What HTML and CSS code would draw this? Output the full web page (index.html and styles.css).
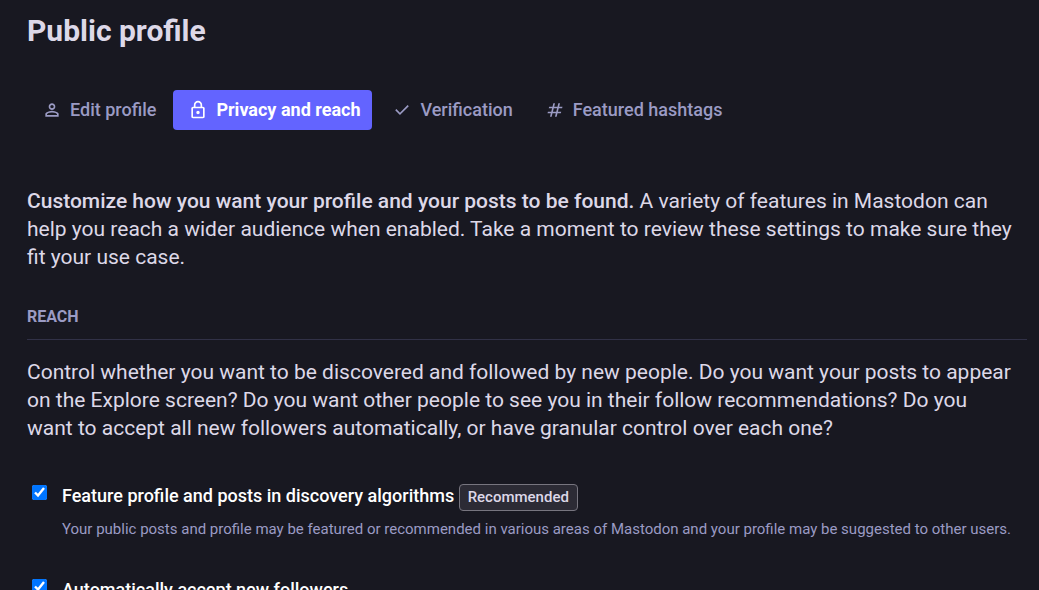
FILE: index.html
```html
<!DOCTYPE html>
<html lang="en">
<head>
    <meta charset="UTF-8">
    <meta name="viewport" content="width=device-width, initial-scale=1">
    <title>Public profile</title>
    <link rel="stylesheet" href="styles.css">
</head>
<body>
    <main class="content">
        <h1>Public profile</h1>

        <nav class="tabs">
            <a href="#profile">
                <svg class="icon" viewBox="0 -960 960 960"><path d="M480-480q-66 0-113-47t-47-113q0-66 47-113t113-47q66 0 113 47t47 113q0 66-47 113t-113 47ZM160-160v-112q0-34 17.500-62.500T224-378q62-31 126-46.500T480-440q66 0 130 15.500T736-378q29 15 46.500 43.500T800-272v112H160Zm80-80h480v-32q0-11-5.500-20T700-306q-54-27-109-40.500T480-360q-56 0-111 13.500T260-306q-9 5-14.500 14t-5.500 20v32Zm240-320q33 0 56.500-23.500T560-640q0-33-23.500-56.500T480-720q-33 0-56.500 23.500T400-640q0 33 23.500 56.500T480-560Z"/></svg>
                Edit profile
            </a>
            <a href="#privacy" class="selected">
                <svg class="icon" viewBox="0 -960 960 960"><path d="M240-80q-33 0-56.500-23.500T160-160v-400q0-33 23.500-56.500T240-640h40v-80q0-83 58.500-141.500T480-920q83 0 141.500 58.500T680-720v80h40q33 0 56.500 23.500T800-560v400q0 33-23.500 56.500T720-80H240Zm0-80h480v-400H240v400Zm240-120q33 0 56.500-23.500T560-360q0-33-23.500-56.500T480-440q-33 0-56.500 23.500T400-360q0 33 23.500 56.500T480-280ZM360-640h240v-80q0-50-35-85t-85-35q-50 0-85 35t-35 85v80Z"/></svg>
                Privacy and reach
            </a>
            <a href="#verification">
                <svg class="icon" viewBox="0 -960 960 960"><path d="M382-240 154-468l57-57 171 171 367-367 57 57-424 424Z"/></svg>
                Verification
            </a>
            <a href="#hashtags">
                <svg class="icon" viewBox="0 -960 960 960"><path d="m240-160 40-160H120l20-80h160l40-160H180l20-80h160l40-160h80l-40 160h160l40-160h80l-40 160h160l-20 80H660l-40 160h160l-20 80H600l-40 160h-80l40-160H360l-40 160h-80Zm140-240h160l40-160H420l-40 160Z"/></svg>
                Featured hashtags
            </a>
        </nav>

        <form>
            <p class="lead"><strong>Customize how you want your profile and your posts to be found.</strong> A variety of features in Mastodon can help you reach a wider audience when enabled. Take a moment to review these settings to make sure they fit your use case.</p>

            <h2>Reach</h2>

            <p class="lead">Control whether you want to be discovered and followed by new people. Do you want your posts to appear on the Explore screen? Do you want other people to see you in their follow recommendations? Do you want&nbsp;to accept all new followers automatically, or have granular control over each one?</p>

            <div class="fields">
                <div class="field">
                    <input type="checkbox" id="discoverable" checked>
                    <div>
                        <label for="discoverable">Feature profile and posts in discovery algorithms <span class="recommended">Recommended</span></label>
                        <p class="hint">Your public posts and profile may be featured or recommended in various areas of Mastodon and your profile may be suggested to other users.</p>
                    </div>
                </div>

                <div class="field">
                    <input type="checkbox" id="unlocked" checked>
                    <div>
                        <label for="unlocked">Automatically accept new followers</label>
                    </div>
                </div>
            </div>
        </form>
    </main>
</body>
</html>
```

FILE: styles.css
```css
html {
    background: #181821;
}
body {
    margin: 0;
    height: 100vh;
    overflow: hidden;
    font-family: Roboto, sans-serif;
    color: #ddd8e8;
}
.content {
    padding: 12px 12px 0 27px;
}
h1 {
    margin: 0 0 40px;
    font-size: 30px;
    line-height: 38px;
    font-weight: 700;
}
.tabs {
    display: flex;
    gap: 5px;
    margin-bottom: 57px;
}
.tabs a {
    display: flex;
    align-items: center;
    gap: 8px;
    padding: 10px 12px 10px 15px;
    border-radius: 4px;
    font-size: 18px;
    line-height: 20px;
    font-weight: 500;
    color: #9b9bc4;
    text-decoration: none;
}
.tabs .selected {
    background: #6364ff;
    font-weight: 700;
    color: #fff;
}
.icon {
    width: 20px;
    height: 20px;
    fill: currentColor;
}
.lead {
    margin: 0 0 33px;
    font-size: 21px;
    line-height: 28px;
}
.lead strong {
    font-weight: 500;
}
h2 {
    margin: 0 0 18px;
    padding-bottom: 9px;
    border-bottom: 1px solid #313147;
    font-size: 16px;
    line-height: 26px;
    font-weight: 700;
    text-transform: uppercase;
    color: #9b9bc4;
}
.fields {
    display: grid;
    gap: 37px;
    margin-top: 40px;
}
.field {
    display: flex;
    gap: 15px;
    padding-left: 5px;
}
.field input {
    flex: none;
    width: 15px;
    height: 15px;
    margin: 3px 0 0;
}
.field label {
    font-size: 18px;
    line-height: 28px;
    font-weight: 500;
    color: #fff;
}
.recommended {
    display: inline-block;
    padding: 0 8px;
    border: 1px solid #77757f;
    border-radius: 4px;
    background: #2c2b35;
    font-size: 15px;
    line-height: 25px;
    color: #ddd8e8;
}
.hint {
    margin: 8px 0 0;
    font-size: 15px;
    line-height: 20px;
    color: #9b9bc4;
}
```
